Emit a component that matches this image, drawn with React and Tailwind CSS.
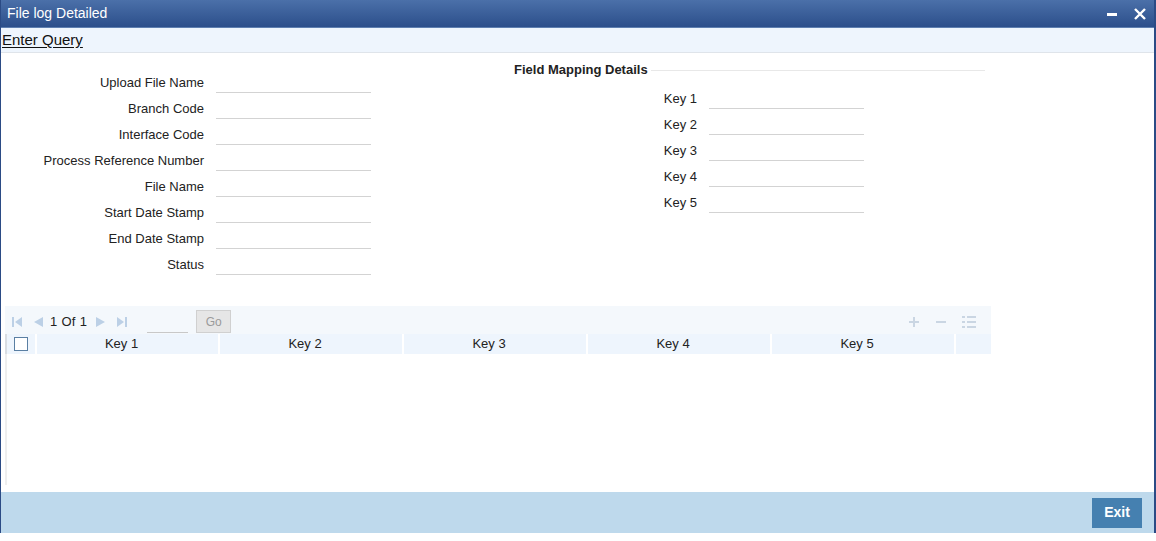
import React from 'react';

const font = { fontFamily: '"Liberation Sans", Arial, sans-serif' };

const leftFields = [
  'Upload File Name',
  'Branch Code',
  'Interface Code',
  'Process Reference Number',
  'File Name',
  'Start Date Stamp',
  'End Date Stamp',
  'Status',
];

const keyFields = ['Key 1', 'Key 2', 'Key 3', 'Key 4', 'Key 5'];

// Single form row: right aligned label + underline-only input
const FieldRow = ({ label, labelWidth }) => (
  <div className="flex items-start h-[26px]">
    <label
      className="mt-[1px] text-right text-[13px] text-[#222] leading-[16px]"
      style={{ width: labelWidth }}
    >
      {label}
    </label>
    <input
      type="text"
      className="ml-[12px] w-[155px] h-[19px] border-0 border-b border-[#d3d3d3] outline-none bg-transparent"
    />
  </div>
);

const TriIcon = ({ dir, bar }) => (
  <svg width="10" height="10" viewBox="0 0 10 10" className="fill-[#bcd0e6]">
    {dir === 'left' ? (
      <>
        {bar && <rect x="0" y="0" width="2" height="10" />}
        <polygon points={bar ? '10,0 3,5 10,10' : '10,0 1,5 10,10'} />
      </>
    ) : (
      <>
        <polygon points={bar ? '0,0 7,5 0,10' : '0,0 9,5 0,10'} />
        {bar && <rect x="8" y="0" width="2" height="10" />}
      </>
    )}
  </svg>
);

export default function App() {
  return (
    <div className="w-[1156px] h-[541px] bg-white flex flex-col overflow-hidden" style={font}>
      <div className="flex-1 flex flex-col border-l border-r-2 border-[#2b4b85]">
        {/* Title bar */}
        <div className="h-[28px] flex items-center justify-between pl-[6px] pr-[8px] bg-gradient-to-b from-[#4b70a9] to-[#2c4f8b] border-b border-[#5e7fb0]">
          <span className="text-white text-[14px]">File log Detailed</span>
          <div className="flex items-center gap-[17px]">
            <div className="w-[10px] h-[3px] bg-white mt-[2px]" />
            <svg width="12" height="12" viewBox="0 0 12 12">
              <path d="M1 1 L11 11 M11 1 L1 11" stroke="white" strokeWidth="2.4" />
            </svg>
          </div>
        </div>

        {/* Enter Query */}
        <div className="h-[25px] bg-[#eef5fd] border-b border-[#dfe4ea] flex items-center pl-[1px]">
          <span className="text-[15px] text-[#111] underline underline-offset-[2px]">Enter Query</span>
        </div>

        {/* Form */}
        <div className="flex h-[253px]">
          <div className="pt-[21px] w-[500px]">
            {leftFields.map((f) => (
              <FieldRow key={f} label={f} labelWidth={203} />
            ))}
          </div>
          <div className="pt-[8px]">
            <div className="flex items-center h-[18px]">
              <span className="ml-[13px] text-[13px] font-bold text-[#222]">Field Mapping Details</span>
              <div className="ml-[3px] w-[334px] h-px bg-[#e8e8e8]" />
            </div>
            <div className="pt-[11px]">
              {keyFields.map((f) => (
                <FieldRow key={f} label={f} labelWidth={196} />
              ))}
            </div>
          </div>
        </div>

        {/* Grid */}
        <div className="ml-[4px] w-[986px] flex flex-col flex-1">
          <div className="h-[28px] bg-[#f4f8fc] flex items-center pl-[7px] pr-[15px] pt-[3px]">
            <TriIcon dir="left" bar />
            <span className="ml-[11px] flex"><TriIcon dir="left" /></span>
            <span className="ml-[7px] text-[13px] text-[#222] tracking-[0.3px]">1 Of 1</span>
            <span className="ml-[9px] flex"><TriIcon dir="right" /></span>
            <span className="ml-[11px] flex"><TriIcon dir="right" bar /></span>
            <div className="ml-[20px] w-[41px] h-[14px] border-b border-[#c8c8c8] mt-[8px]" />
            <button className="ml-[8px] w-[35px] h-[23px] bg-[#e6e6e6] border border-[#d0d0d0] text-[12px] text-[#9a9a9a]">
              Go
            </button>
            <div className="ml-auto flex items-center gap-[15px]">
              <svg width="12" height="12" viewBox="0 0 12 12">
                <path d="M6 1 V11 M1 6 H11" stroke="#cad6e3" strokeWidth="2" />
              </svg>
              <svg width="12" height="12" viewBox="0 0 12 12">
                <path d="M1 6 H11" stroke="#cad6e3" strokeWidth="2" />
              </svg>
              <svg width="14" height="12" viewBox="0 0 14 12" className="fill-[#cad6e3]">
                <rect x="0" y="0" width="3" height="2" />
                <rect x="5" y="0" width="9" height="2" />
                <rect x="0" y="5" width="3" height="2" />
                <rect x="5" y="5" width="9" height="2" />
                <rect x="0" y="10" width="3" height="2" />
                <rect x="5" y="10" width="9" height="2" />
              </svg>
            </div>
          </div>
          <div className="flex h-[20px] bg-[#eef5fd] text-[13px] text-[#222]">
            <div className="w-[30px] flex items-center justify-center border-l-2 border-[#d9dde2]">
              <div className="w-[14px] h-[14px] border border-[#5a7fa3] bg-white" />
            </div>
            {keyFields.map((k, i) => (
              <div
                key={k}
                className={`${i === 0 ? 'w-[183px]' : 'w-[184px]'} flex items-center justify-center pr-[12px] border-l-2 border-white`}
              >
                {k}
              </div>
            ))}
            <div className="flex-1 border-l-2 border-white" />
          </div>
          <div className="flex-1 border-l-2 border-[#eeeeee] mb-[7px]" />
        </div>

        {/* Footer */}
        <div className="h-[41px] bg-[#bed9ec] flex items-center justify-end pr-[12px]">
          <button className="w-[50px] h-[30px] bg-[#4580b0] text-white text-[14px] font-bold">Exit</button>
        </div>
      </div>
      <div className="h-[8px] bg-white" />
    </div>
  );
}
